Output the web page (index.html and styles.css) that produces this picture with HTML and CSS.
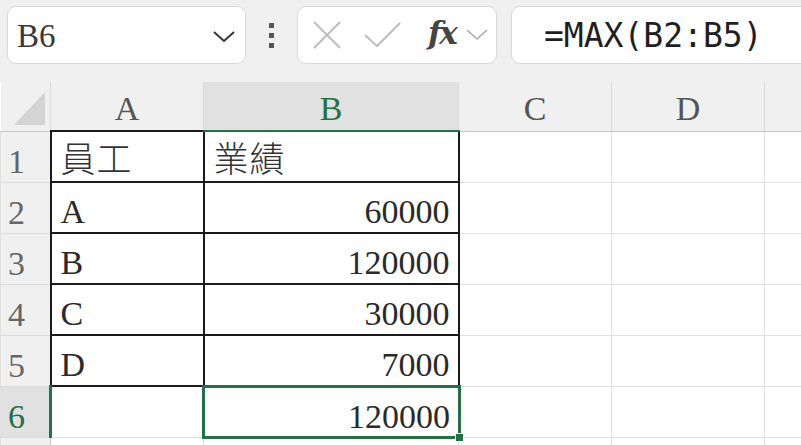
FILE: index.html
```html
<!DOCTYPE html>
<html lang="zh-Hant">
<head>
    <meta charset="UTF-8">
    <meta name="viewport" content="width=device-width, initial-scale=1.0">
    <title>工作表</title>
    <link rel="stylesheet" href="styles.css">
</head>
<body>
    <div class="toolbar">
        <div class="name-box">
            <span class="name-text">B6</span>
            <svg class="chevron" width="24" height="14" viewBox="0 0 24 14">
                <polyline points="2,3 12,12 22,3" fill="none" stroke="#333" stroke-width="2"/>
            </svg>
        </div>
        <div class="grip">
            <span></span><span></span><span></span>
        </div>
        <div class="func-box">
            <svg class="ico" width="30" height="28" viewBox="0 0 30 28">
                <path d="M2,1 L28,27 M28,1 L2,27" stroke="#bdbdbd" stroke-width="2" fill="none"/>
            </svg>
            <svg class="ico" width="38" height="26" viewBox="0 0 38 26">
                <polyline points="1,13 13,24 36,1" stroke="#bdbdbd" stroke-width="2" fill="none"/>
            </svg>
            <span class="fx">fx</span>
            <svg class="ico small" width="22" height="12" viewBox="0 0 22 12">
                <polyline points="1,1 11,10 21,1" stroke="#aaa" stroke-width="1.6" fill="none"/>
            </svg>
        </div>
        <div class="formula">=MAX(B2:B5)</div>
    </div>

    <div class="grid-wrap">
        <table class="sheet">
            <colgroup>
                <col class="c-head">
                <col class="c-a">
                <col class="c-b">
                <col class="c-c">
                <col class="c-d">
                <col class="c-e">
            </colgroup>
            <thead>
                <tr>
                    <th class="corner"><span class="tri"></span></th>
                    <th>A</th>
                    <th class="sel-col">B</th>
                    <th>C</th>
                    <th>D</th>
                    <th></th>
                </tr>
            </thead>
            <tbody>
                <tr>
                    <td class="rh">1</td>
                    <td class="bd"><span class="cjk">員工</span></td>
                    <td class="bd"><span class="cjk">業績</span></td>
                    <td></td><td></td><td></td>
                </tr>
                <tr>
                    <td class="rh">2</td>
                    <td class="bd">A</td>
                    <td class="bd num">60000</td>
                    <td></td><td></td><td></td>
                </tr>
                <tr>
                    <td class="rh">3</td>
                    <td class="bd">B</td>
                    <td class="bd num">120000</td>
                    <td></td><td></td><td></td>
                </tr>
                <tr>
                    <td class="rh">4</td>
                    <td class="bd">C</td>
                    <td class="bd num">30000</td>
                    <td></td><td></td><td></td>
                </tr>
                <tr>
                    <td class="rh">5</td>
                    <td class="bd">D</td>
                    <td class="bd num">7000</td>
                    <td></td><td></td><td></td>
                </tr>
                <tr>
                    <td class="rh sel-row">6</td>
                    <td></td>
                    <td class="num active">120000<span class="sel-frame"></span><span class="handle"></span></td>
                    <td></td><td></td><td></td>
                </tr>
                <tr>
                    <td class="rh"></td>
                    <td></td><td></td><td></td><td></td><td></td>
                </tr>
            </tbody>
        </table>
    </div>
</body>
</html>
```

FILE: styles.css
```css
html, body {
    margin: 0;
    padding: 0;
    background: #fff;
    overflow: hidden;
}
body {
    font-family: "Liberation Serif", "Noto Sans CJK TC", serif;
    color: #2a2a2a;
}

/* formula bar */
.toolbar {
    display: flex;
    align-items: flex-start;
    height: 82px;
    padding: 6px 0 0 7px;
    box-sizing: border-box;
    background: #f0f0f0;
}
.name-box, .func-box, .formula {
    height: 58px;
    box-sizing: border-box;
    background: #fff;
    border: 1px solid #d9d9d9;
    border-radius: 9px;
    display: flex;
    align-items: center;
}
.name-box {
    width: 239px;
    padding: 0 9px 0 9px;
    justify-content: space-between;
}
.name-text {
    font-size: 33px;
    color: #3a3a3a;
    padding-top: 3px;
}
.chevron { margin-top: 2px; }
.grip {
    width: 51px;
    height: 58px;
    display: flex;
    flex-direction: column;
    align-items: center;
    justify-content: center;
    gap: 5px;
}
.grip span {
    width: 5px;
    height: 5px;
    background: #555;
}
.func-box {
    width: 200px;
    padding-left: 14px;
}
.func-box .ico { flex: none; }
.func-box .ico + .ico { margin-left: 22px; }
.fx {
    font-family: "DejaVu Serif", serif;
    font-style: italic;
    font-weight: bold;
    font-size: 31px;
    color: #444;
    margin-left: 26px;
    margin-top: -4px;
    letter-spacing: -2px;
}
.func-box .small { margin-left: 10px; }
.formula {
    flex: 1;
    margin-left: 14px;
    margin-right: -20px;
    padding-left: 32px;
    font-family: "DejaVu Sans Mono", monospace;
    font-size: 33px;
    color: #1f1f1f;
}

/* sheet */
.grid-wrap {
    width: 801px;
    overflow: hidden;
}
.sheet {
    border-collapse: collapse;
    table-layout: fixed;
    width: 964px;
}
.c-head { width: 50px; }
.c-a { width: 153px; }
.c-b { width: 255px; }
.c-c { width: 153px; }
.c-d { width: 153px; }
.c-e { width: 200px; }

.sheet thead tr { height: 49px; }
.sheet tbody tr { height: 51px; }

.sheet th {
    padding: 5px 0 0 0;
    line-height: 38px;
    background: #f0f0f0;
    border-right: 1px solid #dadada;
    border-bottom: 1px solid #c6c6c6;
    font-weight: normal;
    font-size: 34px;
    color: #555;
    text-align: center;
    vertical-align: middle;
}
.sheet th.sel-col {
    background: #e1e1e1;
    color: #217346;
    border-bottom: 2px solid #217346;
}
.sheet th.corner { position: relative; }
.tri {
    position: absolute;
    left: 13px;
    bottom: 6px;
    width: 0;
    height: 0;
    border-left: 31px solid transparent;
    border-bottom: 33px solid #d4d4d4;
}

.sheet td {
    padding: 0 8px 0 9px;
    line-height: 40px;
    border: 1px solid #e1e1e1;
    font-size: 34px;
    vertical-align: bottom;
    white-space: nowrap;
    overflow: visible;
}
.sheet td.rh {
    background: #f0f0f0;
    color: #666;
    padding-left: 7px;
    font-size: 34px;
    border-right: 1px solid #c6c6c6;
    border-bottom: 1px solid #dcdcdc;
}
.sheet td.rh.sel-row {
    background: #e1e1e1;
    color: #217346;
    border-right: 3px solid #217346;
}
.sheet td.bd { border: 2px solid #1a1a1a; }
.sheet td.num { text-align: right; }
.cjk {
    font-family: "Noto Sans CJK TC", sans-serif;
    font-weight: 200;
    font-size: 35px;
    letter-spacing: 1px;
    color: #333;
}

/* active cell */
.sheet td.active { position: relative; }
.sel-frame {
    position: absolute;
    left: -2px;
    top: -2px;
    right: -3px;
    bottom: -2px;
    border: 3px solid #217346;
}
.handle {
    position: absolute;
    right: -6px;
    bottom: -5px;
    width: 7px;
    height: 7px;
    background: #217346;
    border: 1px solid #fff;
}
```
